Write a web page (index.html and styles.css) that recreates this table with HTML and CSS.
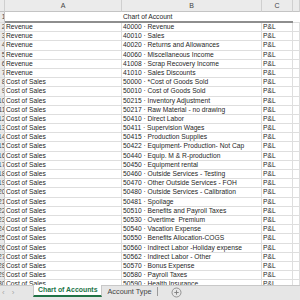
FILE: index.html
```html
<!DOCTYPE html>
<html lang="en">
<head>
    <meta charset="UTF-8">
    <title>Chart of Accounts</title>
    <link rel="stylesheet" href="styles.css">
</head>
<body>

    <div class="sheet">
        <div class="row col-head">
            <div class="cell corner"></div>
            <div class="cell">A</div>
            <div class="cell">B</div>
            <div class="cell">C</div>
            <div class="cell"></div>
        </div>

        <div class="row title-row">
            <div class="cell num"><span>1</span></div>
            <div class="cell"></div>
            <div class="cell">Chart of Account</div>
            <div class="cell"></div>
            <div class="cell plain"></div>
        </div>

        <div class="row"><div class="cell num"><span>2</span></div><div class="cell">Revenue</div><div class="cell">40000 · Revenue</div><div class="cell">P&amp;L</div><div class="cell"></div></div>
        <div class="row"><div class="cell num"><span>3</span></div><div class="cell">Revenue</div><div class="cell">40010 · Sales</div><div class="cell">P&amp;L</div><div class="cell"></div></div>
        <div class="row"><div class="cell num"><span>4</span></div><div class="cell">Revenue</div><div class="cell">40020 · Returns and Allowances</div><div class="cell">P&amp;L</div><div class="cell"></div></div>
        <div class="row"><div class="cell num"><span>5</span></div><div class="cell">Revenue</div><div class="cell">40060 · Miscellaneous Income</div><div class="cell">P&amp;L</div><div class="cell"></div></div>
        <div class="row"><div class="cell num"><span>6</span></div><div class="cell">Revenue</div><div class="cell">41008 · Scrap Recovery Income</div><div class="cell">P&amp;L</div><div class="cell"></div></div>
        <div class="row"><div class="cell num"><span>7</span></div><div class="cell">Revenue</div><div class="cell">41010 · Sales Discounts</div><div class="cell">P&amp;L</div><div class="cell"></div></div>
        <div class="row"><div class="cell num"><span>8</span></div><div class="cell">Cost of Sales</div><div class="cell">50000 · *Cost of Goods Sold</div><div class="cell">P&amp;L</div><div class="cell"></div></div>
        <div class="row"><div class="cell num"><span>9</span></div><div class="cell">Cost of Sales</div><div class="cell">50010 · Cost of Goods Sold</div><div class="cell">P&amp;L</div><div class="cell"></div></div>
        <div class="row"><div class="cell num"><span>10</span></div><div class="cell">Cost of Sales</div><div class="cell">50215 · Inventory Adjustment</div><div class="cell">P&amp;L</div><div class="cell"></div></div>
        <div class="row"><div class="cell num"><span>11</span></div><div class="cell">Cost of Sales</div><div class="cell">50217 · Raw Material - no drawing</div><div class="cell">P&amp;L</div><div class="cell"></div></div>
        <div class="row"><div class="cell num"><span>12</span></div><div class="cell">Cost of Sales</div><div class="cell">50410 · Direct Labor</div><div class="cell">P&amp;L</div><div class="cell"></div></div>
        <div class="row"><div class="cell num"><span>13</span></div><div class="cell">Cost of Sales</div><div class="cell">50411 · Supervision Wages</div><div class="cell">P&amp;L</div><div class="cell"></div></div>
        <div class="row"><div class="cell num"><span>14</span></div><div class="cell">Cost of Sales</div><div class="cell">50415 · Production Supplies</div><div class="cell">P&amp;L</div><div class="cell"></div></div>
        <div class="row"><div class="cell num"><span>15</span></div><div class="cell">Cost of Sales</div><div class="cell">50422 · Equipment- Production- Not Cap</div><div class="cell">P&amp;L</div><div class="cell"></div></div>
        <div class="row"><div class="cell num"><span>16</span></div><div class="cell">Cost of Sales</div><div class="cell">50440 · Equip. M &amp; R-production</div><div class="cell">P&amp;L</div><div class="cell"></div></div>
        <div class="row"><div class="cell num"><span>17</span></div><div class="cell">Cost of Sales</div><div class="cell">50450 · Equipment rental</div><div class="cell">P&amp;L</div><div class="cell"></div></div>
        <div class="row"><div class="cell num"><span>18</span></div><div class="cell">Cost of Sales</div><div class="cell">50460 · Outside Services - Testing</div><div class="cell">P&amp;L</div><div class="cell"></div></div>
        <div class="row"><div class="cell num"><span>19</span></div><div class="cell">Cost of Sales</div><div class="cell">50470 · Other Outside Services - FOH</div><div class="cell">P&amp;L</div><div class="cell"></div></div>
        <div class="row"><div class="cell num"><span>20</span></div><div class="cell">Cost of Sales</div><div class="cell">50480 · Outside Services - Calibration</div><div class="cell">P&amp;L</div><div class="cell"></div></div>
        <div class="row"><div class="cell num"><span>21</span></div><div class="cell">Cost of Sales</div><div class="cell">50481 · Spoilage</div><div class="cell">P&amp;L</div><div class="cell"></div></div>
        <div class="row"><div class="cell num"><span>22</span></div><div class="cell">Cost of Sales</div><div class="cell">50510 · Benefits and Payroll Taxes</div><div class="cell">P&amp;L</div><div class="cell"></div></div>
        <div class="row"><div class="cell num"><span>23</span></div><div class="cell">Cost of Sales</div><div class="cell">50530 · Overtime &nbsp;Premium</div><div class="cell">P&amp;L</div><div class="cell"></div></div>
        <div class="row"><div class="cell num"><span>24</span></div><div class="cell">Cost of Sales</div><div class="cell">50540 · Vacation Expense</div><div class="cell">P&amp;L</div><div class="cell"></div></div>
        <div class="row"><div class="cell num"><span>25</span></div><div class="cell">Cost of Sales</div><div class="cell">50550 · Benefits Allocation-COGS</div><div class="cell">P&amp;L</div><div class="cell"></div></div>
        <div class="row"><div class="cell num"><span>26</span></div><div class="cell">Cost of Sales</div><div class="cell">50560 · Indirect Labor -Holiday expense</div><div class="cell">P&amp;L</div><div class="cell"></div></div>
        <div class="row"><div class="cell num"><span>27</span></div><div class="cell">Cost of Sales</div><div class="cell">50562 · Indirect Labor - Other</div><div class="cell">P&amp;L</div><div class="cell"></div></div>
        <div class="row"><div class="cell num"><span>28</span></div><div class="cell">Cost of Sales</div><div class="cell">50570 · Bonus Expense</div><div class="cell">P&amp;L</div><div class="cell"></div></div>
        <div class="row"><div class="cell num"><span>29</span></div><div class="cell">Cost of Sales</div><div class="cell">50580 · Payroll Taxes</div><div class="cell">P&amp;L</div><div class="cell"></div></div>
        <div class="row"><div class="cell num"><span>30</span></div><div class="cell">Cost of Sales</div><div class="cell">50590 · Health Insurance</div><div class="cell">P&amp;L</div><div class="cell"></div></div>
    </div>

    <div class="tabs">
        <div class="tab-nav">
            <span>&#8249;</span>
            <span>&#8250;</span>
        </div>
        <div class="tab active">Chart of Accounts</div>
        <div class="tab">Account Type</div>
        <div class="tab-sep"></div>
        <svg class="tab-add" width="11" height="11" viewBox="0 0 11 11">
            <circle cx="5.5" cy="5.5" r="4.5" fill="none" stroke="#8a8a8a" stroke-width="0.9"/>
            <path d="M5.5 3.3v4.4M3.3 5.5h4.4" stroke="#7a7a7a" stroke-width="0.9"/>
        </svg>
    </div>

</body>
</html>
```

FILE: styles.css
```css
body {
    font-family: "Liberation Sans", Arial, sans-serif;
    font-size: 6.7px;
    color: #262626;
    background-color: #fff;
    margin: 0;
    padding: 0;
    overflow: hidden;
}

.sheet {
    height: 285px;
    overflow: hidden;
}

.row {
    display: grid;
    grid-template-columns: 5px 117px 140px 31px 1fr;
    height: 9.2px;
}

.cell {
    box-sizing: border-box;
    border-right: 1px solid #dedede;
    border-bottom: 1px solid #dedede;
    padding-left: 1px;
    line-height: 8.4px;
    white-space: nowrap;
    overflow: hidden;
}

/* row numbers, mostly scrolled off to the left */
.num {
    display: flex;
    justify-content: flex-end;
    padding: 0;
    background-color: #ebebeb;
    border-right-color: #c4c4c4;
    color: #444;
}

.num span {
    margin-right: -1.5px;
}

.col-head {
    height: 12px;
}

.col-head .cell {
    background-color: #ebebeb;
    border-bottom-color: #c4c4c4;
    border-right-color: #cfcfcf;
    color: #444;
    font-size: 7px;
    text-align: center;
    line-height: 12px;
    padding: 0;
}

.title-row {
    height: 11px;
}

.title-row .cell {
    line-height: 9px;
    border-right: none;
    border-bottom: 2px solid #8e8e8e;
}

.title-row .num {
    border-right: 1px solid #c4c4c4;
    border-bottom: 1px solid #dedede;
}

.title-row .plain {
    border-bottom: 1px solid #dedede;
}

.tabs {
    box-sizing: border-box;
    height: 15px;
    display: flex;
    align-items: flex-start;
    background-color: #e6e6e6;
    border-top: 1px solid #c8c8c8;
}

.tab-nav {
    width: 33px;
    height: 12px;
    display: flex;
    align-items: center;
    gap: 7px;
    padding-left: 2px;
    box-sizing: border-box;
    color: #a6a6a6;
    font-size: 8px;
}

.tab {
    height: 12px;
    line-height: 11px;
    padding: 0 5px;
    font-size: 7.3px;
    color: #444;
}

.tab.active {
    box-sizing: border-box;
    margin-top: -1px;
    height: 12px;
    background-color: #fff;
    color: #217346;
    font-weight: bold;
    font-size: 6.9px;
    border-left: 1px solid #c8c8c8;
    border-right: 1px solid #c8c8c8;
    border-bottom: 2px solid #217346;
    padding: 0 4px;
    line-height: 10px;
}

.tab-sep {
    width: 1px;
    height: 9px;
    margin-top: 1px;
    background-color: #9a9a9a;
}

.tab-add {
    margin-left: 13px;
    margin-top: 1px;
}
```
